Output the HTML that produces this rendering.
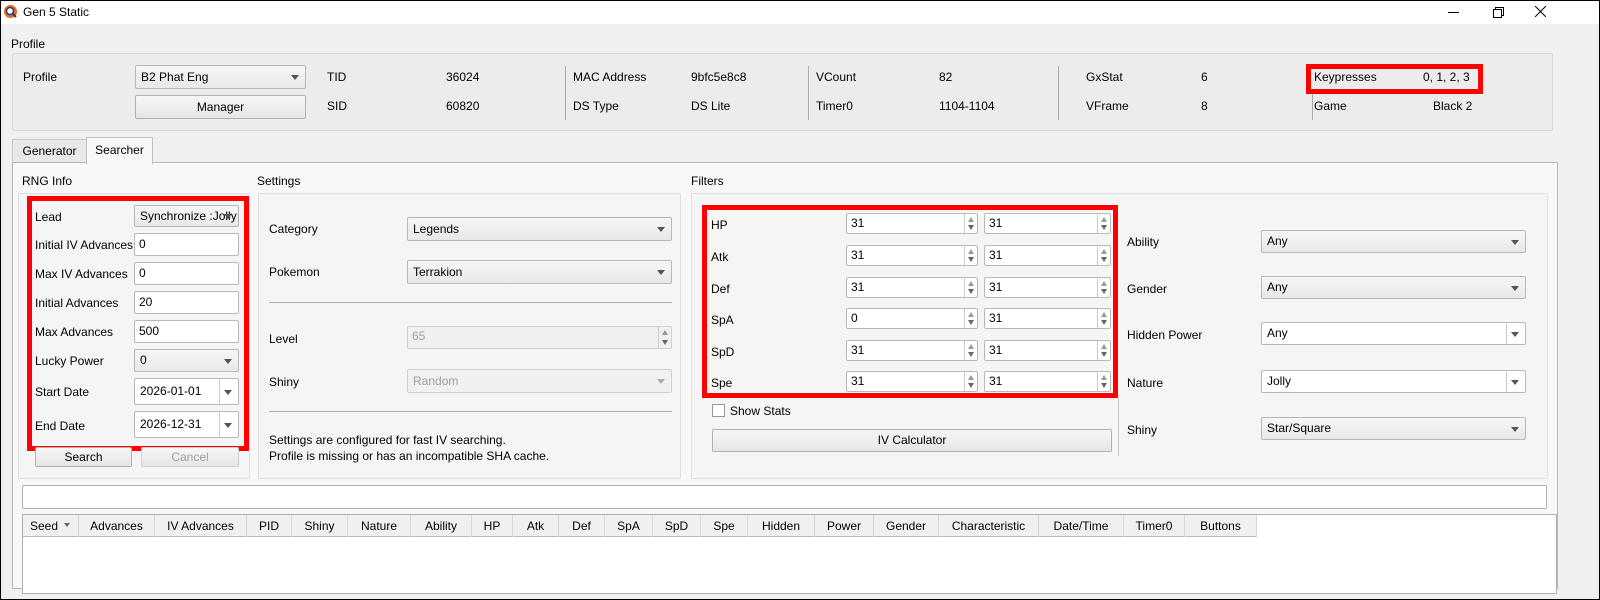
<!DOCTYPE html>
<html><head><meta charset="utf-8"><style>
*{box-sizing:border-box;margin:0;padding:0}
body{width:1600px;height:600px;overflow:hidden;background:#000;font-family:"Liberation Sans",sans-serif;font-size:12px;color:#000;position:relative}
#win{position:absolute;left:1px;top:1px;width:1598px;height:598px;background:#f0f0f0;overflow:hidden}
#tb{position:absolute;left:0;top:0;width:100%;height:23px;background:#fff}
.a{position:absolute;white-space:nowrap}
.grp{position:absolute;border:1px solid #dadada;border-radius:2px;background:#ececec}
.grp2{position:absolute;border:1px solid #e0e0e0;border-radius:2px;background:#f5f5f5}
.cb{position:absolute;border:1px solid #b8b8b8;border-radius:2px;background:linear-gradient(#f6f6f6,#e8e8e8);padding-left:5px;line-height:20px;overflow:hidden;white-space:nowrap}
.cb:after{content:"";position:absolute;right:6px;top:50%;margin-top:-2px;border-left:4px solid transparent;border-right:4px solid transparent;border-top:5px solid #555}
.cb.dis{color:#a0a0a0;background:#f0f0f0;border-color:#d0d0d0}
.cb.dis:after{border-top-color:#aaa}
.cb.sp{background:#fff}
.cb.sp:before{content:"";position:absolute;right:18px;top:0;bottom:0;border-left:1px solid #ccc}
.in{position:absolute;border:1px solid #b8b8b8;border-radius:2px;background:#fff;padding-left:4px;line-height:20px}
.spin{position:absolute;border:1px solid #b8b8b8;border-radius:2px;background:#fff;padding-left:4px;line-height:19px;height:21px}
.spin i{position:absolute;right:0;top:0;bottom:0;width:13px;border-left:1px solid #ccc}
.spin i:before{content:"";position:absolute;left:3px;top:3px;border-left:3px solid transparent;border-right:3px solid transparent;border-bottom:5px solid #999}
.spin i:after{content:"";position:absolute;left:3px;bottom:3px;border-left:3px solid transparent;border-right:3px solid transparent;border-top:5px solid #666}
.spin.dis{background:#f0f0f0;color:#a0a0a0;border-color:#d0d0d0}
.btn{position:absolute;border:1px solid #b0b0b0;border-radius:2px;background:linear-gradient(#f6f6f6,#e6e6e6);text-align:center;line-height:20px}
.btn.dis{color:#a0a0a0;border-color:#cfcfcf}
.red{position:absolute;border:5px solid #f00}
.vs{position:absolute;width:1px;background:#aaa}
.hs{position:absolute;height:1px;background:#b0b0b0}
.th{position:absolute;top:0;height:22px;line-height:22px;text-align:center;border-right:1px solid #d8d8d8}
</style></head><body><div id="win">
<div id="tb">
 <svg class="a" style="left:2px;top:3px" width="16" height="16" viewBox="0 0 16 16"><circle cx="7.5" cy="7.5" r="6.5" fill="#f26522"/><circle cx="7" cy="7" r="3.5" fill="#fff" stroke="#1a3f7a" stroke-width="1.5"/><line x1="9.5" y1="9.5" x2="13" y2="13" stroke="#1a3f7a" stroke-width="2"/></svg>
 <div class="a" style="left:22px;top:4px">Gen 5 Static</div>
 <div class="a" style="left:1447px;top:11px;width:11px;height:1px;background:#000"></div>
 <div class="a" style="left:1494px;top:6px;width:9px;height:9px;border:1px solid #000;background:#fff"></div>
 <div class="a" style="left:1492px;top:8px;width:9px;height:9px;border:1px solid #000;background:#fff"></div>
 <svg class="a" style="left:1534px;top:5px" width="11" height="11"><path d="M0 0L11 11M11 0L0 11" stroke="#000" stroke-width="1"/></svg>
</div>
<div class="a" style="left:10px;top:36px">Profile</div>
<div class="grp" style="left:11px;top:52px;width:1541px;height:78px"></div>
<div class="a" style="left:22px;top:69px">Profile</div>
<div class="cb" style="left:134px;top:64px;width:171px;height:24px;line-height:22px">B2 Phat Eng</div>
<div class="btn" style="left:134px;top:94px;width:171px;height:24px;line-height:22px">Manager</div>
<div class="a" style="left:326px;top:69px">TID</div><div class="a" style="left:445px;top:69px">36024</div>
<div class="a" style="left:326px;top:98px">SID</div><div class="a" style="left:445px;top:98px">60820</div>
<div class="vs" style="left:564px;top:65px;height:54px"></div>
<div class="a" style="left:572px;top:69px">MAC Address</div><div class="a" style="left:690px;top:69px">9bfc5e8c8</div>
<div class="a" style="left:572px;top:98px">DS Type</div><div class="a" style="left:690px;top:98px">DS Lite</div>
<div class="vs" style="left:807px;top:65px;height:54px"></div>
<div class="a" style="left:815px;top:69px">VCount</div><div class="a" style="left:938px;top:69px">82</div>
<div class="a" style="left:815px;top:98px">Timer0</div><div class="a" style="left:938px;top:98px">1104-1104</div>
<div class="vs" style="left:1057px;top:65px;height:54px"></div>
<div class="a" style="left:1085px;top:69px">GxStat</div><div class="a" style="left:1200px;top:69px">6</div>
<div class="a" style="left:1085px;top:98px">VFrame</div><div class="a" style="left:1200px;top:98px">8</div>
<div class="vs" style="left:1311px;top:65px;height:54px"></div>
<div class="red" style="left:1305px;top:63px;width:177px;height:30px;background:#ececec"></div>
<div class="a" style="left:1313px;top:69px">Keypresses</div><div class="a" style="left:1422px;top:69px">0, 1, 2, 3</div>
<div class="a" style="left:1313px;top:98px">Game</div><div class="a" style="left:1432px;top:98px">Black 2</div>
<!-- tabs -->
<div class="a" style="left:11px;top:138px;width:75px;height:24px;border:1px solid #c8c8c8;border-bottom:none;background:#e8e8e8;text-align:center;line-height:22px">Generator</div>
<div class="a" style="left:11px;top:161px;width:1546px;height:427px;border:1px solid #b8b8b8;background:#f8f8f8"></div>
<div class="a" style="left:85px;top:136px;width:67px;height:27px;border:1px solid #c0c0c0;border-bottom:none;background:#f8f8f8;text-align:center;line-height:24px">Searcher</div>
<!-- RNG info -->
<div class="a" style="left:21px;top:173px">RNG Info</div>
<div class="grp2" style="left:17px;top:192px;width:232px;height:286px"></div>
<div class="red" style="left:26px;top:195px;width:222px;height:255px"></div>
<div class="a" style="left:34px;top:209px">Lead</div><div class="cb" style="left:133px;top:204px;width:105px;height:22px;padding-right:12px">Synchronize :Jolly</div>
<div class="a" style="left:34px;top:237px">Initial IV Advances</div><div class="in" style="left:133px;top:232px;width:105px;height:23px">0</div>
<div class="a" style="left:34px;top:266px">Max IV Advances</div><div class="in" style="left:133px;top:261px;width:105px;height:23px">0</div>
<div class="a" style="left:34px;top:295px">Initial Advances</div><div class="in" style="left:133px;top:290px;width:105px;height:23px">20</div>
<div class="a" style="left:34px;top:324px">Max Advances</div><div class="in" style="left:133px;top:319px;width:105px;height:23px">500</div>
<div class="a" style="left:34px;top:353px">Lucky Power</div><div class="cb" style="left:133px;top:348px;width:105px;height:23px">0</div>
<div class="a" style="left:34px;top:384px">Start Date</div><div class="cb sp" style="left:133px;top:377px;width:105px;height:27px;line-height:25px">2026-01-01</div>
<div class="a" style="left:34px;top:418px">End Date</div><div class="cb sp" style="left:133px;top:410px;width:105px;height:27px;line-height:25px">2026-12-31</div>
<div class="btn" style="left:34px;top:446px;width:97px;height:20px;line-height:18px">Search</div>
<div class="btn dis" style="left:140px;top:446px;width:98px;height:20px;line-height:18px">Cancel</div>
<!-- Settings -->
<div class="a" style="left:256px;top:173px">Settings</div>
<div class="grp2" style="left:257px;top:192px;width:423px;height:286px"></div>
<div class="a" style="left:268px;top:221px">Category</div><div class="cb" style="left:406px;top:216px;width:265px;height:24px;line-height:22px">Legends</div>
<div class="a" style="left:268px;top:264px">Pokemon</div><div class="cb" style="left:406px;top:259px;width:265px;height:24px;line-height:22px">Terrakion</div>
<div class="hs" style="left:268px;top:301px;width:403px"></div>
<div class="a" style="left:268px;top:331px">Level</div><div class="spin dis" style="left:406px;top:325px;width:265px;height:23px">65<i></i></div>
<div class="a" style="left:268px;top:374px">Shiny</div><div class="cb dis" style="left:406px;top:368px;width:265px;height:24px;line-height:22px">Random</div>
<div class="hs" style="left:268px;top:410px;width:403px"></div>
<div class="a" style="left:268px;top:432px">Settings are configured for fast IV searching.</div>
<div class="a" style="left:268px;top:448px">Profile is missing or has an incompatible SHA cache.</div>
<!-- Filters -->
<div class="a" style="left:690px;top:173px">Filters</div>
<div class="grp2" style="left:690px;top:192px;width:857px;height:286px"></div>
<div class="red" style="left:701px;top:204px;width:416px;height:193px"></div>
<div class="a" style="left:710px;top:217px">HP</div><div class="spin" style="left:845px;top:212px;width:132px">31<i></i></div><div class="spin" style="left:983px;top:212px;width:127px">31<i></i></div>
<div class="a" style="left:710px;top:249px">Atk</div><div class="spin" style="left:845px;top:244px;width:132px">31<i></i></div><div class="spin" style="left:983px;top:244px;width:127px">31<i></i></div>
<div class="a" style="left:710px;top:281px">Def</div><div class="spin" style="left:845px;top:276px;width:132px">31<i></i></div><div class="spin" style="left:983px;top:276px;width:127px">31<i></i></div>
<div class="a" style="left:710px;top:312px">SpA</div><div class="spin" style="left:845px;top:307px;width:132px">0<i></i></div><div class="spin" style="left:983px;top:307px;width:127px">31<i></i></div>
<div class="a" style="left:710px;top:344px">SpD</div><div class="spin" style="left:845px;top:339px;width:132px">31<i></i></div><div class="spin" style="left:983px;top:339px;width:127px">31<i></i></div>
<div class="a" style="left:710px;top:375px">Spe</div><div class="spin" style="left:845px;top:370px;width:132px">31<i></i></div><div class="spin" style="left:983px;top:370px;width:127px">31<i></i></div>
<div class="a" style="left:711px;top:403px;width:13px;height:13px;border:1px solid #999;background:#fff"></div>
<div class="a" style="left:729px;top:403px">Show Stats</div>
<div class="btn" style="left:711px;top:428px;width:400px;height:23px;line-height:21px">IV Calculator</div>
<div class="vs" style="left:1117px;top:397px;height:58px;background:#c8c8c8"></div>
<div class="a" style="left:1126px;top:234px">Ability</div><div class="cb" style="left:1260px;top:229px;width:265px;height:23px">Any</div>
<div class="a" style="left:1126px;top:281px">Gender</div><div class="cb" style="left:1260px;top:275px;width:265px;height:23px">Any</div>
<div class="a" style="left:1126px;top:327px">Hidden Power</div><div class="cb sp" style="left:1260px;top:321px;width:265px;height:23px">Any</div>
<div class="a" style="left:1126px;top:375px">Nature</div><div class="cb sp" style="left:1260px;top:369px;width:265px;height:23px">Jolly</div>
<div class="a" style="left:1126px;top:422px">Shiny</div><div class="cb" style="left:1260px;top:416px;width:265px;height:23px">Star/Square</div>
<!-- table -->
<div class="a" style="left:21px;top:484px;width:1525px;height:24px;border:1px solid #b0b0b0;border-radius:2px;background:#fff"></div>
<div class="a" style="left:21px;top:513px;width:1535px;height:80px;border:1px solid #b0b0b0;background:#fff">
 <div class="a" style="left:0;top:0;width:1234px;height:22px;background:#f0f0f0;border-bottom:1px solid #b8b8b8"></div>
 <div class="th" style="left:0;width:56px;text-align:left;padding-left:7px">Seed</div>
 <div class="a" style="left:41px;top:8px;border-left:3px solid transparent;border-right:3px solid transparent;border-top:4px solid #666"></div>
 <div class="th" style="left:56px;width:76px">Advances</div>
 <div class="th" style="left:132px;width:92px">IV Advances</div>
 <div class="th" style="left:224px;width:45px">PID</div>
 <div class="th" style="left:269px;width:56px">Shiny</div>
 <div class="th" style="left:325px;width:63px">Nature</div>
 <div class="th" style="left:388px;width:61px">Ability</div>
 <div class="th" style="left:449px;width:41px">HP</div>
 <div class="th" style="left:490px;width:46px">Atk</div>
 <div class="th" style="left:536px;width:46px">Def</div>
 <div class="th" style="left:582px;width:48px">SpA</div>
 <div class="th" style="left:630px;width:48px">SpD</div>
 <div class="th" style="left:678px;width:47px">Spe</div>
 <div class="th" style="left:725px;width:67px">Hidden</div>
 <div class="th" style="left:792px;width:59px">Power</div>
 <div class="th" style="left:851px;width:65px">Gender</div>
 <div class="th" style="left:916px;width:100px">Characteristic</div>
 <div class="th" style="left:1016px;width:85px">Date/Time</div>
 <div class="th" style="left:1101px;width:61px">Timer0</div>
 <div class="th" style="left:1162px;width:72px">Buttons</div>
</div>
</div></body></html>
